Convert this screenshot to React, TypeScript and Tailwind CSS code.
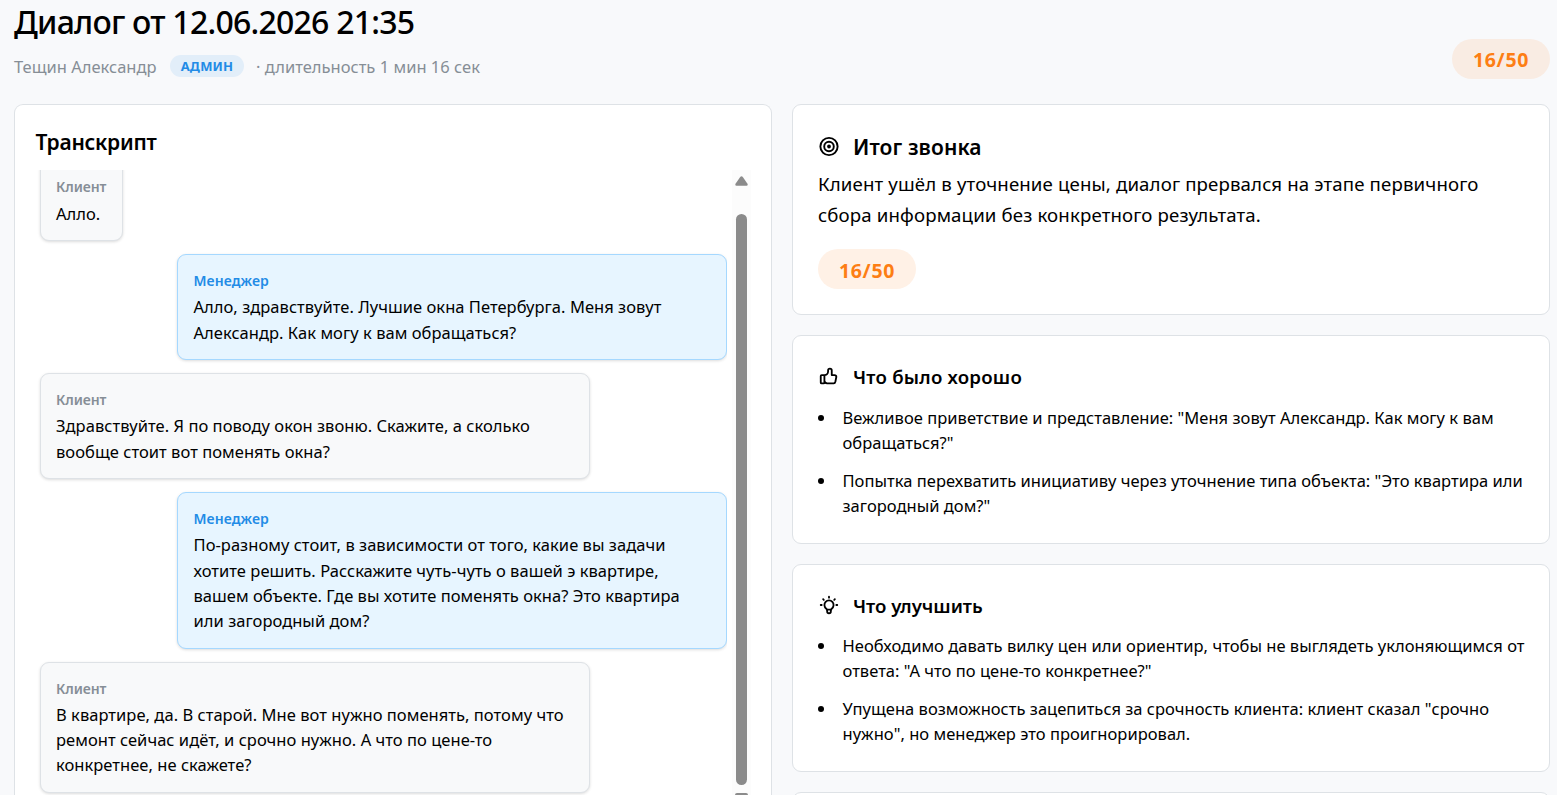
import type { ReactNode } from "react";
import { TbBulb, TbTarget, TbThumbUp } from "react-icons/tb";

interface Message {
  role: "client" | "manager";
  lines: string[];
}

const messages: Message[] = [
  { role: "client", lines: ["Алло."] },
  {
    role: "manager",
    lines: ["Алло, здравствуйте. Лучшие окна Петербурга. Меня зовут", "Александр. Как могу к вам обращаться?"],
  },
  {
    role: "client",
    lines: ["Здравствуйте. Я по поводу окон звоню. Скажите, а сколько", "вообще стоит вот поменять окна?"],
  },
  {
    role: "manager",
    lines: [
      "По-разному стоит, в зависимости от того, какие вы задачи",
      "хотите решить. Расскажите чуть-чуть о вашей э квартире,",
      "вашем объекте. Где вы хотите поменять окна? Это квартира",
      "или загородный дом?",
    ],
  },
  {
    role: "client",
    lines: [
      "В квартире, да. В старой. Мне вот нужно поменять, потому что",
      "ремонт сейчас идёт, и срочно нужно. А что по цене-то",
      "конкретнее, не скажете?",
    ],
  },
];

const good = [
  ['Вежливое приветствие и представление: "Меня зовут Александр. Как могу к вам', 'обращаться?"'],
  ['Попытка перехватить инициативу через уточнение типа объекта: "Это квартира или', 'загородный дом?"'],
];

const improve = [
  ["Необходимо давать вилку цен или ориентир, чтобы не выглядеть уклоняющимся от", 'ответа: "А что по цене-то конкретнее?"'],
  ['Упущена возможность зацепиться за срочность клиента: клиент сказал "срочно', 'нужно", но менеджер это проигнорировал.'],
];

function Lines({ lines }: { lines: string[] }) {
  return (
    <>
      {lines.map((line) => (
        <span key={line} className="block whitespace-nowrap">{line}</span>
      ))}
    </>
  );
}

function Score({ className }: { className: string }) {
  return (
    <div className={`flex h-10 w-[98px] items-center justify-center rounded-full text-[19.5px] font-bold tracking-[0.7px] text-[#fd7e14] ${className}`}>
      16/50
    </div>
  );
}

function Bubble({ message }: { message: Message }) {
  const manager = message.role === "manager";
  return (
    <div
      className={`shrink-0 rounded-[9px] border px-[15px] pt-[15px] pb-[14.6px] shadow-[0_1px_3px_rgba(0,0,0,0.14)] ${
        manager ? "self-end border-[#a5d8ff] bg-[#e7f5ff]" : "self-start border-[#dee2e6] bg-[#f8f9fa]"
      } ${message.lines.length > 1 ? "w-[550px]" : "w-[83px]"}`}
    >
      <div className={`mb-[2.2px] text-[14px] leading-[22px] font-semibold ${manager ? "pl-[0.5px] tracking-[0.1px] text-[#228be6]" : "tracking-[-0.1px] text-[#868e96]"}`}>
        {manager ? "Менеджер" : "Клиент"}
      </div>
      <p className={`text-[16.5px] leading-[25.3px] tracking-[0.04px] ${manager ? "pl-[0.5px]" : ""}`}>
        <Lines lines={message.lines} />
      </p>
    </div>
  );
}

function Card({ className = "", children }: { className?: string; children?: ReactNode }) {
  return <section className={`shrink-0 rounded-[9px] border border-[#dee2e6] bg-white px-[25px] ${className}`}>{children}</section>;
}

function BulletList({ items }: { items: string[][] }) {
  return (
    <ul className="flex flex-col gap-[12.5px] text-[16.5px] leading-[25.3px] tracking-[0.03px]">
      {items.map((lines) => (
        <li key={lines[0]} className="flex">
          <span className="mt-[10px] mr-[18.5px] size-[6px] shrink-0 rounded-full bg-black" />
          <div>
            <Lines lines={lines} />
          </div>
        </li>
      ))}
    </ul>
  );
}

export default function App() {
  return (
    <div className="flex h-[795px] w-[1557px] flex-col overflow-hidden bg-[#f8f9fb] pr-[7px] pl-[14px] font-['Noto_Sans','Open_Sans',sans-serif] text-black">
      <header className="flex h-[104px] shrink-0 justify-between">
        <div>
          <h1 className="h-[46px] text-[32px] leading-[44px] font-medium tracking-[-0.76px] whitespace-nowrap">
            Диалог от 12.06.2026 21:35
          </h1>
          <div className="mt-[9px] flex h-[22px] items-center text-[16.5px] tracking-[0.02px] whitespace-nowrap text-[#868e96]">
            <span className="w-[156px] pt-[2px]">Тещин Александр</span>
            <span className="flex h-[22px] w-[74px] items-center justify-center rounded-full bg-[#e2eef9] pt-px text-[13px] font-bold tracking-[0.2px] text-[#228be6]">
              АДМИН
            </span>
            <span className="ml-[12px] pt-[2px]">· длительность 1 мин 16 сек</span>
          </div>
        </div>
        <Score className="mt-[39px] bg-[#f9ece3] pt-[2px]" />
      </header>

      <main className="flex min-h-0 flex-1 gap-5">
        <section className="flex w-[758px] flex-col rounded-t-[9px] border border-b-0 border-[#dee2e6] bg-white">
          <h2 className="h-[65px] shrink-0 pt-[22px] pl-[20.5px] text-[21px] leading-[30px] font-semibold tracking-[-0.25px]">Транскрипт</h2>
          <div className="flex min-h-0 flex-1 overflow-hidden">
            <div className="w-[712px] overflow-hidden pl-[25px]">
              <div className="-mt-[9.6px] flex flex-col gap-[12.6px]">
                {messages.map((message) => (
                  <Bubble key={message.lines[0]} message={message} />
                ))}
              </div>
            </div>
            <div className="ml-[5px] flex w-[19px] flex-col items-center bg-[#fcfcfc]">
              <svg viewBox="0 0 13 10" className="mt-[6px] h-[10px] w-[13px] shrink-0 fill-[#8b8b8b]">
                <path d="M5.4.8Q6.5-.4 7.6.8L12.5 7.8Q13.2 9.7 11.5 9.7H1.5Q-.2 9.7.5 7.8Z" />
              </svg>
              <div className="mt-[28px] h-[571px] w-[11px] shrink-0 rounded-full bg-[#8b8b8b]" />
              <div className="mt-[8px] h-[8px] w-[13px] shrink-0 rounded-t-[2px] bg-[#8b8b8b]" />
            </div>
          </div>
        </section>

        <div className="flex w-[758px] flex-col">
          <Card className="mb-5 h-[211px]">
            <h2 className="mt-[28px] flex h-[30px] items-center gap-[12px] text-[21px] font-semibold tracking-[0.1px]">
              <TbTarget size={23} className="mb-[3px] -ml-px w-[24px]" />
              Итог звонка
            </h2>
            <p className="mt-[6px] text-[18.67px] leading-[30.8px] tracking-[0.13px]">
              <Lines lines={["Клиент ушёл в уточнение цены, диалог прервался на этапе первичного", "сбора информации без конкретного результата."]} />
            </p>
            <Score className="mt-[18px] bg-[#fff1e6] pt-[4px]" />
          </Card>
          <Card className="mb-5 h-[209px]">
            <h3 className="mt-[27px] mb-[14px] flex h-[28px] items-center gap-[13px] text-[18.67px] font-semibold tracking-[0.22px]">
              <TbThumbUp size={22} className="mb-[2px]" />
              Что было хорошо
            </h3>
            <BulletList items={good} />
          </Card>
          <Card className="mb-5 h-[208px]">
            <h3 className="mt-[27px] mb-[13px] flex h-[28px] items-center gap-[13px] text-[18.67px] font-semibold tracking-[-0.04px]">
              <TbBulb size={22} className="mb-[2px]" />
              Что улучшить
            </h3>
            <BulletList items={improve} />
          </Card>
          <Card className="h-[208px]" />
        </div>
      </main>
    </div>
  );
}
